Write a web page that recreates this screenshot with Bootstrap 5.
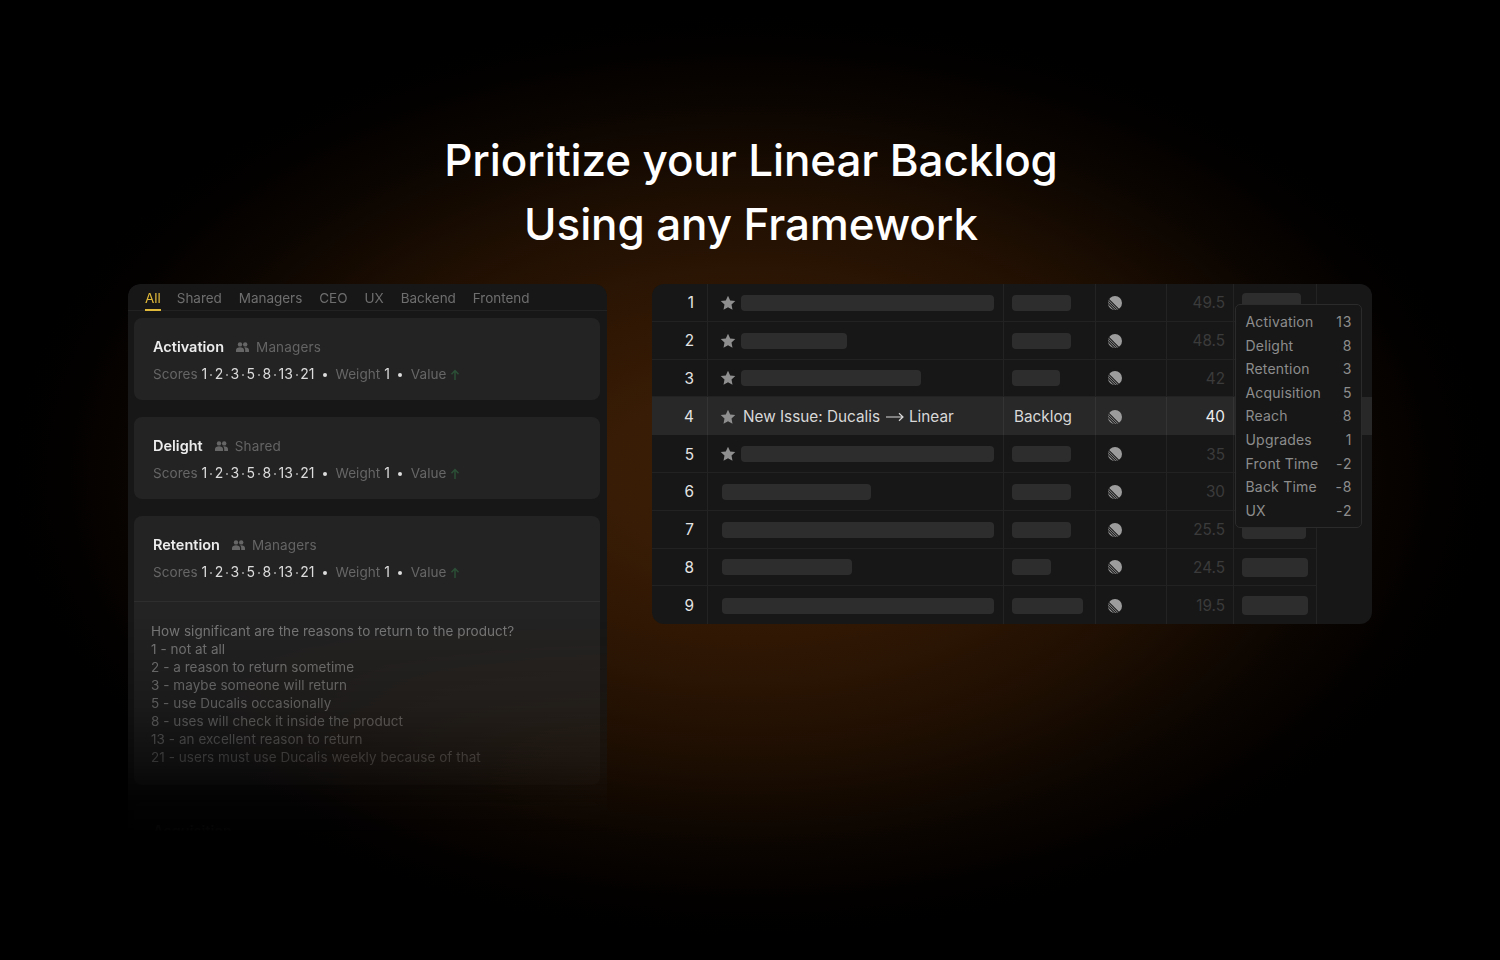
<!DOCTYPE html>
<html lang="en"><head><meta charset="utf-8"><title>Prioritize</title>
<link href="https://cdn.jsdelivr.net/npm/bootstrap@5.3.0/dist/css/bootstrap.min.css" rel="stylesheet">
<style>
html,body{height:100%}
body{margin:0;width:1500px;height:960px;overflow:hidden;font-family:Inter,"Liberation Sans",sans-serif;color:#fff;
 background:radial-gradient(ellipse 740px 460px at 750px 475px,#3c1e05 0%,#381c05 20%,#2a1403 45%,#1d0e02 62%,#0d0601 78%,#030100 92%,#000 100%)}
.hero-title{font-size:44px;line-height:64px;font-weight:500;padding:128px 0 0 2px;height:284px;margin:0;letter-spacing:-.12px}
.stage{padding-left:128px;gap:45px}
.left-panel{width:479px;height:560px;background:#171717;border-radius:12px 12px 0 0;overflow:hidden;
 -webkit-mask-image:linear-gradient(#000 0,#000 330px,rgba(0,0,0,.75) 420px,rgba(0,0,0,.4) 480px,rgba(0,0,0,.08) 520px,rgba(0,0,0,.015) 546px,transparent 547px);mask-image:linear-gradient(#000 0,#000 330px,rgba(0,0,0,.75) 420px,rgba(0,0,0,.4) 480px,rgba(0,0,0,.08) 520px,rgba(0,0,0,.015) 546px,transparent 547px)}
.tabs-row{height:27px;border-bottom:1px solid #222;padding-left:17px;gap:17px;font-size:13.5px;line-height:28px;color:#6e6e6e;letter-spacing:-.03px}
.tab-item{height:27px}
.tab-on{color:#e0b93a;border-bottom:2px solid #e0b93a;margin-right:-1px}
.metric-card{margin:7px 7px 0 6px;background:#232323;border-radius:8px;height:82px;margin-bottom:17px;padding:19px 19px 0}
.metric-card+.metric-card{margin-top:0}
.metric-card.opened{height:269px;padding:0}
.opened .head-part{height:86px;padding:19px 19px 0;border-bottom:1px solid #2e2e2e}
.name-line{height:20px;font-size:14.5px;line-height:20px;font-weight:600;color:#ececec}
.group-tag{font-size:13.5px;font-weight:400;color:#646464;margin-left:12px;gap:7px;letter-spacing:.15px}
.info-line{margin-top:7px;height:20px;font-size:13.5px;line-height:20px;color:#666;letter-spacing:.06px}
.info-line b{font-weight:400;color:#dcdcdc;letter-spacing:0;font-size:14px}
.dots{display:inline-block;width:2px;height:2px;border-radius:50%;background:#a5a5a5;margin:0 2.7px;vertical-align:3px}
.bullet{display:inline-block;width:4px;height:4px;border-radius:50%;background:#ddd;margin:0 8.5px;vertical-align:2px}
.desc-text{padding:20px 17px 0;font-size:13.5px;line-height:18px;color:#7a7a7a;letter-spacing:.05px}
.right-panel{width:720px;height:340px;background:#171717;border-radius:12px;overflow:hidden}
.data-row{height:37.8px;border-bottom:1px solid #222;width:665px}
.wide-row{width:720px;background:#282828;border-bottom:0}
.cell{height:100%;border-right:1px solid #232323;flex:none;padding-top:1px}
.wide-row .cell{border-right-color:#343434}
.c-num{width:56px;font-size:15.3px;color:#e4e4e4;padding-right:13px;padding-top:3px;justify-content:flex-end}
.c-title{width:296px;padding-left:12px;font-size:15.3px;color:#d8d8d8}
.c-title.plain{padding-left:14px}
.c-state{width:92px;padding-left:8px;font-size:15.3px;color:#d8d8d8}
.c-icon{width:71px;padding-left:12px}
.c-val{width:67px;justify-content:flex-end;padding-right:8px;padding-top:3px;font-size:15.3px;color:#3b3b3b}
.wide-row .c-val{color:#eee}
.c-bar{width:83px;padding-left:8px}
.ph{background:#2d2d2d;border-radius:4px;height:16px;display:block}
.ph-tall{height:19px}
.star-ic{width:16px;height:16px;flex:none;margin-right:5px}
.star-ic.roomy{margin-right:7px}
.flow-arrow{margin:0 5px 0 6px;flex:none}
.row-txt{margin-top:2px}
.bk-lbl{margin-left:2px;margin-top:2px}
.tip-box{position:absolute;left:1235px;top:304px;width:127px;height:224px;background:#171717;border:1px solid #2b2b2b;border-radius:5px;padding:5px 9.5px 0;font-size:14px;line-height:23.6px;color:#8d8d8d;letter-spacing:.2px}
.tip-box span:last-child{letter-spacing:.9px;margin-right:-.9px}
</style></head><body>
<h1 class="hero-title text-center">Prioritize your Linear Backlog<br>Using any Framework</h1>
<div class="stage d-flex align-items-start">
<div class="left-panel flex-none">
 <div class="tabs-row d-flex"><span class="tab-item tab-on">All</span><span class="tab-item">Shared</span><span class="tab-item">Managers</span><span class="tab-item">CEO</span><span class="tab-item">UX</span><span class="tab-item">Backend</span><span class="tab-item">Frontend</span></div>
 <div class="metric-card">
  <div class="name-line d-flex align-items-center">Activation<span class="group-tag d-inline-flex align-items-center"><svg width="13" height="10" viewBox="0 0 13 10" fill="#666"><circle cx="4" cy="2.4" r="2.2"/><circle cx="9.2" cy="2.4" r="2.2"/><path d="M0 10V8c0-1.800 2-2.800 4-2.800s4 1 4 2.800v2zM9 5.200c2 0 4 1 4 2.800v2H9.200V8c0-1-.3-2-1.200-2.700z"/></svg>Managers</span></div>
  <div class="info-line">Scores <b>1<i class="dots"></i>2<i class="dots"></i>3<i class="dots"></i>5<i class="dots"></i>8<i class="dots"></i>13<i class="dots"></i>21</b><i class="bullet"></i>Weight <b>1</b><i class="bullet"></i>Value <svg width="10" height="12" viewBox="0 0 10 12" fill="none" stroke="#2c4f37" stroke-width="1.500"><path d="M5 11V2M1.500 5.200 5 1.600l3.500 3.600"/></svg></div>
 </div>
 <div class="metric-card">
  <div class="name-line d-flex align-items-center">Delight<span class="group-tag d-inline-flex align-items-center"><svg width="13" height="10" viewBox="0 0 13 10" fill="#666"><circle cx="4" cy="2.4" r="2.2"/><circle cx="9.2" cy="2.4" r="2.2"/><path d="M0 10V8c0-1.800 2-2.800 4-2.800s4 1 4 2.800v2zM9 5.200c2 0 4 1 4 2.800v2H9.200V8c0-1-.3-2-1.200-2.700z"/></svg>Shared</span></div>
  <div class="info-line">Scores <b>1<i class="dots"></i>2<i class="dots"></i>3<i class="dots"></i>5<i class="dots"></i>8<i class="dots"></i>13<i class="dots"></i>21</b><i class="bullet"></i>Weight <b>1</b><i class="bullet"></i>Value <svg width="10" height="12" viewBox="0 0 10 12" fill="none" stroke="#2c4f37" stroke-width="1.500"><path d="M5 11V2M1.500 5.200 5 1.600l3.500 3.600"/></svg></div>
 </div>
 <div class="metric-card opened">
  <div class="head-part">
  <div class="name-line d-flex align-items-center">Retention<span class="group-tag d-inline-flex align-items-center"><svg width="13" height="10" viewBox="0 0 13 10" fill="#666"><circle cx="4" cy="2.4" r="2.2"/><circle cx="9.2" cy="2.4" r="2.2"/><path d="M0 10V8c0-1.800 2-2.800 4-2.800s4 1 4 2.800v2zM9 5.200c2 0 4 1 4 2.800v2H9.200V8c0-1-.3-2-1.200-2.700z"/></svg>Managers</span></div>
  <div class="info-line">Scores <b>1<i class="dots"></i>2<i class="dots"></i>3<i class="dots"></i>5<i class="dots"></i>8<i class="dots"></i>13<i class="dots"></i>21</b><i class="bullet"></i>Weight <b>1</b><i class="bullet"></i>Value <svg width="10" height="12" viewBox="0 0 10 12" fill="none" stroke="#2c4f37" stroke-width="1.500"><path d="M5 11V2M1.500 5.200 5 1.600l3.500 3.600"/></svg></div>
  </div>
  <div class="desc-text">How significant are the reasons to return to the product?<br>1 - not at all<br>2 - a reason to return sometime<br>3 - maybe someone will return<br>5 - use Ducalis occasionally<br>8 - uses will check it inside the product<br>13 - an excellent reason to return<br>21 - users must use Ducalis weekly because of that</div>
 </div>
 <div class="metric-card"><div class="name-line">Acquisition</div></div>
</div>
<div class="right-panel flex-none">
<svg width="0" height="0" class="d-block"><defs>
<symbol id="st" viewBox="0 0 16 16"><path fill="#8f8f8f" d="M8 .8l2.200 4.700 5.100.6-3.800 3.500 1 5.100L8 12.200l-4.500 2.500 1-5.100L.7 6.100l5.100-.6z"/></symbol>
<clipPath id="cc"><circle cx="7" cy="7" r="7"/></clipPath>
<symbol id="ci" viewBox="0 0 14 14"><g clip-path="url(#cc)"><rect width="14" height="14" fill="#9c9c9c"/><path stroke="#1a1a1a" stroke-width="1.100" fill="none" d="M-1 6.500 7.500 15M-1 4 10 15M-1 1.500 12.500 15"/></g></symbol>
</defs></svg>
<div class="data-row d-flex"><div class="cell c-num d-flex align-items-center">1</div><div class="cell c-title d-flex align-items-center"><svg class="star-ic"><use href="#st"/></svg><span class="ph" style="width:253px"></span></div><div class="cell c-state d-flex align-items-center"><span class="ph" style="width:59px"></span></div><div class="cell c-icon d-flex align-items-center"><svg width="14" height="14"><use href="#ci"/></svg></div><div class="cell c-val d-flex align-items-center">49.5</div><div class="cell c-bar d-flex align-items-center"><span class="ph ph-tall" style="width:59px"></span></div></div>
<div class="data-row d-flex"><div class="cell c-num d-flex align-items-center">2</div><div class="cell c-title d-flex align-items-center"><svg class="star-ic"><use href="#st"/></svg><span class="ph" style="width:106px"></span></div><div class="cell c-state d-flex align-items-center"><span class="ph" style="width:59px"></span></div><div class="cell c-icon d-flex align-items-center"><svg width="14" height="14"><use href="#ci"/></svg></div><div class="cell c-val d-flex align-items-center">48.5</div><div class="cell c-bar d-flex align-items-center"></div></div>
<div class="data-row d-flex"><div class="cell c-num d-flex align-items-center">3</div><div class="cell c-title d-flex align-items-center"><svg class="star-ic"><use href="#st"/></svg><span class="ph" style="width:180px"></span></div><div class="cell c-state d-flex align-items-center"><span class="ph" style="width:48px"></span></div><div class="cell c-icon d-flex align-items-center"><svg width="14" height="14"><use href="#ci"/></svg></div><div class="cell c-val d-flex align-items-center">42</div><div class="cell c-bar d-flex align-items-center"></div></div>
<div class="data-row wide-row d-flex"><div class="cell c-num d-flex align-items-center">4</div><div class="cell c-title d-flex align-items-center"><svg class="star-ic roomy"><use href="#st"/></svg><span class="row-txt">New Issue: Ducalis</span><svg width="18" height="10" viewBox="0 0 18 10" fill="none" stroke="#d8d8d8" stroke-width="1.200" class="flow-arrow"><path d="M0 5h17M13 1.200 17 5l-4 3.800"/></svg><span class="row-txt">Linear</span></div><div class="cell c-state d-flex align-items-center"><span class="bk-lbl">Backlog</span></div><div class="cell c-icon d-flex align-items-center"><svg width="14" height="14"><use href="#ci"/></svg></div><div class="cell c-val d-flex align-items-center">40</div><div class="cell c-bar d-flex align-items-center"></div></div>
<div class="data-row d-flex"><div class="cell c-num d-flex align-items-center">5</div><div class="cell c-title d-flex align-items-center"><svg class="star-ic"><use href="#st"/></svg><span class="ph" style="width:253px"></span></div><div class="cell c-state d-flex align-items-center"><span class="ph" style="width:59px"></span></div><div class="cell c-icon d-flex align-items-center"><svg width="14" height="14"><use href="#ci"/></svg></div><div class="cell c-val d-flex align-items-center">35</div><div class="cell c-bar d-flex align-items-center"></div></div>
<div class="data-row d-flex"><div class="cell c-num d-flex align-items-center">6</div><div class="cell c-title plain d-flex align-items-center"><span class="ph" style="width:149px"></span></div><div class="cell c-state d-flex align-items-center"><span class="ph" style="width:59px"></span></div><div class="cell c-icon d-flex align-items-center"><svg width="14" height="14"><use href="#ci"/></svg></div><div class="cell c-val d-flex align-items-center">30</div><div class="cell c-bar d-flex align-items-center"></div></div>
<div class="data-row d-flex"><div class="cell c-num d-flex align-items-center">7</div><div class="cell c-title plain d-flex align-items-center"><span class="ph" style="width:272px"></span></div><div class="cell c-state d-flex align-items-center"><span class="ph" style="width:59px"></span></div><div class="cell c-icon d-flex align-items-center"><svg width="14" height="14"><use href="#ci"/></svg></div><div class="cell c-val d-flex align-items-center">25.5</div><div class="cell c-bar d-flex align-items-center"><span class="ph ph-tall" style="width:64px"></span></div></div>
<div class="data-row d-flex"><div class="cell c-num d-flex align-items-center">8</div><div class="cell c-title plain d-flex align-items-center"><span class="ph" style="width:130px"></span></div><div class="cell c-state d-flex align-items-center"><span class="ph" style="width:39px"></span></div><div class="cell c-icon d-flex align-items-center"><svg width="14" height="14"><use href="#ci"/></svg></div><div class="cell c-val d-flex align-items-center">24.5</div><div class="cell c-bar d-flex align-items-center"><span class="ph ph-tall" style="width:66px"></span></div></div>
<div class="data-row d-flex border-bottom-0"><div class="cell c-num d-flex align-items-center">9</div><div class="cell c-title plain d-flex align-items-center"><span class="ph" style="width:272px"></span></div><div class="cell c-state d-flex align-items-center"><span class="ph" style="width:71px"></span></div><div class="cell c-icon d-flex align-items-center"><svg width="14" height="14"><use href="#ci"/></svg></div><div class="cell c-val d-flex align-items-center">19.5</div><div class="cell c-bar d-flex align-items-center"><span class="ph ph-tall" style="width:66px"></span></div></div>
</div>
</div>
<div class="tip-box">
<div class="d-flex justify-content-between"><span>Activation</span><span>13</span></div>
<div class="d-flex justify-content-between"><span>Delight</span><span>8</span></div>
<div class="d-flex justify-content-between"><span>Retention</span><span>3</span></div>
<div class="d-flex justify-content-between"><span>Acquisition</span><span>5</span></div>
<div class="d-flex justify-content-between"><span>Reach</span><span>8</span></div>
<div class="d-flex justify-content-between"><span>Upgrades</span><span>1</span></div>
<div class="d-flex justify-content-between"><span>Front Time</span><span>-2</span></div>
<div class="d-flex justify-content-between"><span>Back Time</span><span>-8</span></div>
<div class="d-flex justify-content-between"><span>UX</span><span>-2</span></div>
</div>
<script src="https://cdn.jsdelivr.net/npm/bootstrap@5.3.0/dist/js/bootstrap.bundle.min.js"></script>
</body></html>
